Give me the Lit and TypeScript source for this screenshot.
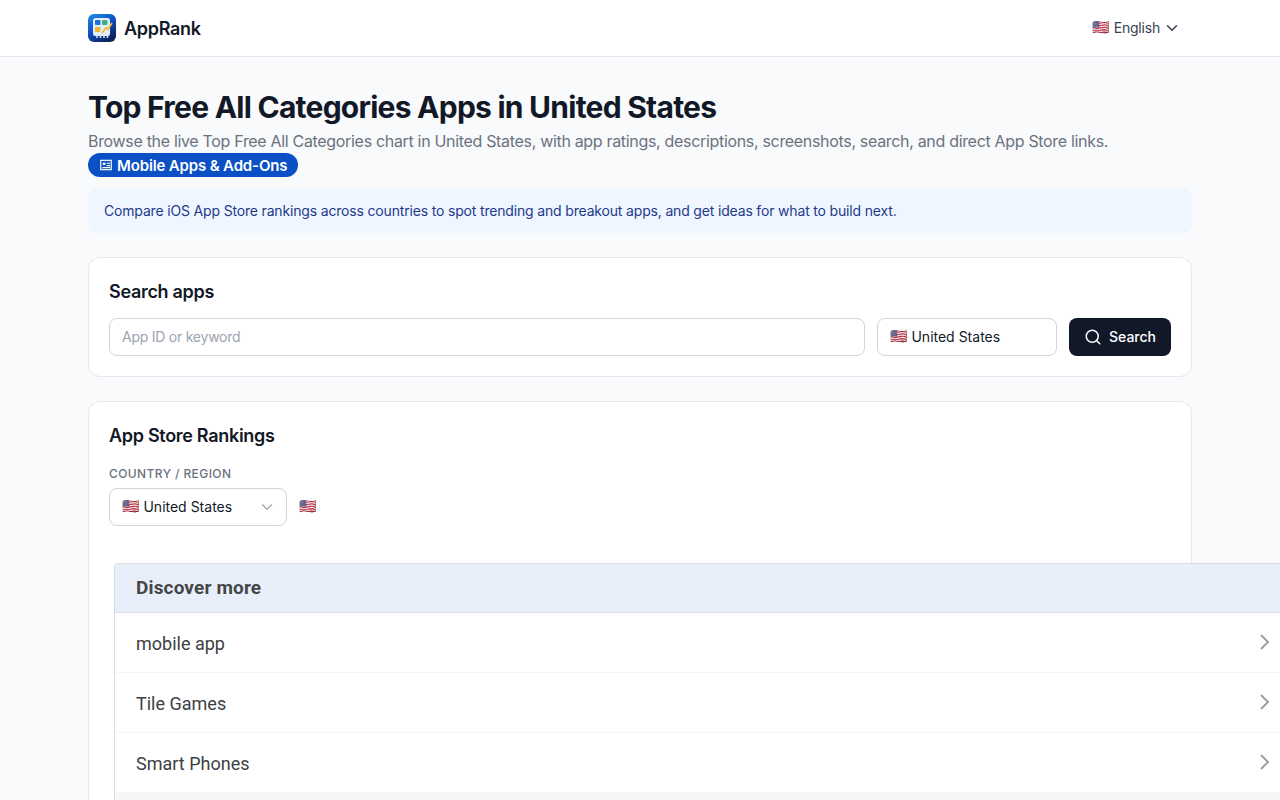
import { LitElement, html, css } from 'lit';
import { customElement } from 'lit/decorators.js';

const chevronDown = html`<svg viewBox="0 0 24 24" fill="none" stroke="currentColor" stroke-width="2" stroke-linecap="round" stroke-linejoin="round"><path d="m6 9 6 6 6-6"></path></svg>`;

@customElement('app-root')
export class AppRoot extends LitElement {
  static styles = css`
    :host {
      display: block;
      height: 800px;
      overflow: hidden;
      background: #f9fafb;
      font-family: Inter, 'Liberation Sans', sans-serif;
      color: #111827;
    }

    header {
      height: 56px;
      background: #ffffff;
      border-bottom: 1px solid #e5e7eb;
      padding: 0 88px;
      display: flex;
      align-items: center;
      justify-content: space-between;
    }

    .brand {
      display: flex;
      align-items: center;
      gap: 8px;
      font-size: 18px;
      font-weight: 600;
      letter-spacing: -0.3px;
    }

    .logo {
      width: 28px;
      height: 28px;
      display: block;
    }

    .lang {
      display: flex;
      align-items: center;
      gap: 4px;
      font-size: 14px;
      letter-spacing: -0.2px;
      color: #374151;
      margin-right: 11px;
      padding-bottom: 2px;
    }

    .lang svg {
      width: 18px;
      height: 18px;
      margin: 2px 0 0 -1px;
    }

    .lang .flag {
      top: 0;
    }

    .flag {
      font-size: 14px;
      line-height: 1;
      font-family: 'Noto Color Emoji', sans-serif;
      position: relative;
      top: -1px;
    }

    main {
      padding: 32px 88px 0;
      width: 1104px;
      box-sizing: content-box;
    }

    h1 {
      margin: 0;
      font-size: 30px;
      line-height: 36px;
      font-weight: 700;
      letter-spacing: -0.75px;
    }

    .subtitle {
      margin: 4px 0 0;
      font-size: 16px;
      line-height: 24px;
      letter-spacing: -0.32px;
      color: #6b7280;
    }

    .tag {
      display: inline-flex;
      align-items: center;
      gap: 4px;
      height: 24px;
      padding: 0 11px;
      box-sizing: border-box;
      border-radius: 999px;
      background: #0b50c4;
      color: #ffffff;
      font-size: 15px;
      font-weight: 600;
      letter-spacing: -0.15px;
      vertical-align: top;
    }

    .tag svg {
      width: 14px;
      height: 14px;
    }

    .notice {
      margin-top: 12px;
      padding: 12px 16px;
      height: 44px;
      box-sizing: border-box;
      border-radius: 8px;
      background: #eff6ff;
      color: #1e3a8a;
      font-size: 14px;
      line-height: 20px;
      letter-spacing: -0.17px;
    }

    .card {
      margin-top: 24px;
      background: #ffffff;
      border: 1px solid #e5e7eb;
      border-radius: 12px;
      padding: 20px;
    }

    .notice + .card {
      height: 120px;
      box-sizing: border-box;
    }

    h2 {
      margin: 0;
      font-size: 18px;
      line-height: 28px;
      font-weight: 600;
      letter-spacing: -0.3px;
    }

    .search-row {
      display: flex;
      gap: 12px;
      margin-top: 12px;
    }

    .field {
      height: 38px;
      box-sizing: border-box;
      border: 1px solid #d1d5db;
      border-radius: 8px;
      background: #ffffff;
      font-size: 14px;
      display: flex;
      align-items: center;
      padding: 0 12px 1px;
    }

    .keyword {
      flex: 1;
      color: #9ca3af;
      letter-spacing: -0.24px;
    }

    .country {
      width: 180px;
      gap: 4px;
      color: #111827;
    }

    .button {
      width: 102px;
      height: 38px;
      padding-bottom: 1px;
      box-sizing: border-box;
      border-radius: 8px;
      background: #111827;
      color: #ffffff;
      font-size: 14px;
      font-weight: 500;
      display: flex;
      align-items: center;
      justify-content: center;
      gap: 7px;
    }

    .button svg {
      width: 18px;
      height: 18px;
    }

    .rankings {
      height: 600px;
      box-sizing: border-box;
    }

    .label {
      margin-top: 16px;
      font-size: 12px;
      line-height: 16px;
      font-weight: 500;
      letter-spacing: 0.4px;
      color: #6b7280;
    }

    .region {
      display: flex;
      align-items: center;
      gap: 12px;
      margin-top: 6px;
    }

    .select {
      width: 178px;
      gap: 4px;
      position: relative;
    }

    .select svg {
      position: absolute;
      right: 10px;
      top: 9px;
      width: 18px;
      height: 18px;
      color: #9ca3af;
      stroke-width: 1.5;
    }

    .ad {
      margin: 37px 0 0 5px;
      width: 1190px;
      background: #ffffff;
      border: 1px solid #dadce0;
      border-right: none;
      border-radius: 4px 0 0 4px;
      font-family: Roboto, Arial, sans-serif;
    }

    .ad-title {
      height: 49px;
      box-sizing: border-box;
      padding: 0 0 2px 21px;
      display: flex;
      align-items: center;
      background: #e8effb;
      border-bottom: 1px solid #dadce0;
      font-size: 19px;
      font-weight: 700;
      letter-spacing: 0.15px;
      color: #444746;
    }

    .ad-row {
      height: 60px;
      box-sizing: border-box;
      padding: 2px 0 0 21px;
      display: flex;
      align-items: center;
      border-bottom: 1px solid #f6f6f6;
      font-size: 18px;
      color: #3c4043;
    }

    .ad-row span {
      width: 1123px;
    }

    .ad-row svg {
      width: 12px;
      height: 18px;
      color: #9aa0a6;
      margin-top: -3px;
    }

    .ad-end {
      height: 8px;
      background: #f6f6f6;
    }
  `;

  render() {
    const terms = ['mobile app', 'Tile Games', 'Smart Phones'];
    return html`
      <header>
        <div class="brand">
          <svg class="logo" viewBox="0 0 28 28">
            <defs>
              <linearGradient id="lg" x1="0" y1="0" x2="0.6" y2="1">
                <stop offset="0" stop-color="#1f8fee"></stop>
                <stop offset="0.55" stop-color="#0b4fc0"></stop>
                <stop offset="1" stop-color="#0c2460"></stop>
              </linearGradient>
            </defs>
            <rect width="28" height="28" rx="6" fill="url(#lg)"></rect>
            <rect x="5" y="4" width="17" height="18" rx="2.5" fill="#e4eefb"></rect>
            <rect x="7" y="6" width="5.5" height="5" rx="1" fill="#1f6fdc"></rect>
            <rect x="14" y="6" width="5.5" height="5" rx="1" fill="#38b27c"></rect>
            <rect x="7" y="13" width="5.5" height="5" rx="1" fill="#f2b632"></rect>
            <path d="M14 19l4-5 2 1 4-6" fill="none" stroke="#f4b832" stroke-width="1.8"></path>
            <path d="M9 21v3M12.5 21v3M16 21v3M19.5 21v3" stroke="#dbe7f7" stroke-width="1.5"></path>
          </svg>
          AppRank
        </div>
        <div class="lang"><span class="flag">🇺🇸</span> English ${chevronDown}</div>
      </header>
      <main>
        <h1>Top Free All Categories Apps in United States</h1>
        <p class="subtitle">Browse the live Top Free All Categories chart in United States, with app ratings, descriptions, screenshots, search, and direct App Store links.</p>
        <div class="tag">
          <svg viewBox="0 0 24 24" fill="none" stroke="currentColor" stroke-width="2" stroke-linecap="square"><rect x="3" y="4" width="18" height="16"></rect><rect x="6.5" y="8" width="4.5" height="4" fill="currentColor" stroke="none"></rect><path d="M14 9h4M14 13h4M7 16.5h11"></path></svg>
          Mobile Apps &amp; Add-Ons
        </div>
        <div class="notice">Compare iOS App Store rankings across countries to spot trending and breakout apps, and get ideas for what to build next.</div>
        <section class="card">
          <h2>Search apps</h2>
          <div class="search-row">
            <div class="field keyword">App ID or keyword</div>
            <div class="field country"><span class="flag">🇺🇸</span> United States</div>
            <div class="button">
              <svg viewBox="0 0 24 24" fill="none" stroke="currentColor" stroke-width="2" stroke-linecap="round"><circle cx="11" cy="11" r="8"></circle><path d="m21 21-4.3-4.3"></path></svg>
              Search
            </div>
          </div>
        </section>
        <section class="card rankings">
          <h2>App Store Rankings</h2>
          <div class="label">COUNTRY / REGION</div>
          <div class="region">
            <div class="field select"><span class="flag">🇺🇸</span> United States ${chevronDown}</div>
            <span class="flag">🇺🇸</span>
          </div>
          <div class="ad">
            <div class="ad-title">Discover more</div>
            ${terms.map(term => html`
              <div class="ad-row">
                <span>${term}</span>
                <svg viewBox="0 0 12 18" fill="none" stroke="currentColor" stroke-width="2"><path d="m2 2 7 7-7 7"></path></svg>
              </div>
            `)}
            <div class="ad-end"></div>
          </div>
        </section>
      </main>
    `;
  }
}
